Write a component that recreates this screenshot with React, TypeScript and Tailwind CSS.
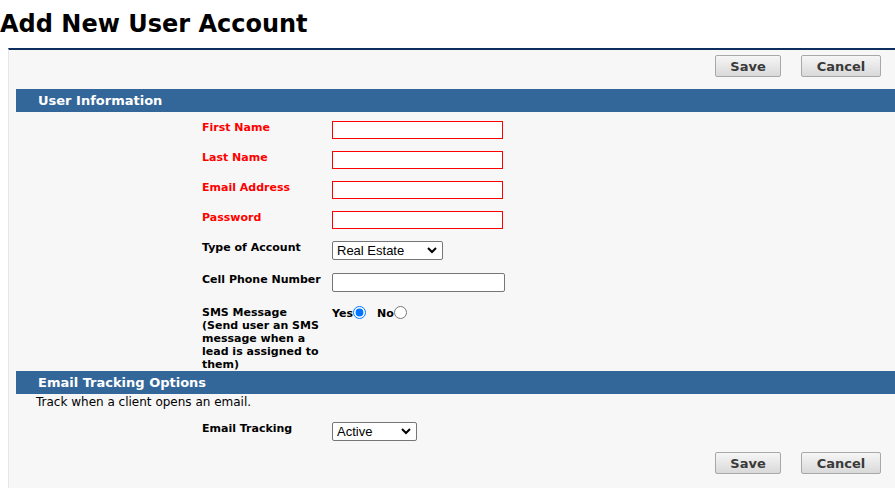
import React from 'react';

const font = "font-['DejaVu_Sans',Verdana,sans-serif]";

const Button: React.FC<{ label: string; width: string }> = ({ label, width }) => (
  <button
    type="button"
    className={`${width} h-[22px] rounded-[2px] border border-[#a8a8a8] bg-gradient-to-b from-[#f6f6f6] to-[#d9d9d9] text-[13px] font-bold leading-none text-[#3a3a3a]`}
  >
    {label}
  </button>
);

const Chevron = () => (
  <svg className="pointer-events-none absolute right-[6px] top-[6px]" width="10" height="7" viewBox="0 0 10 7">
    <path d="M1 1l4 4 4-4" fill="none" stroke="#000" strokeWidth="2" />
  </svg>
);

const Select: React.FC<{ value: string; width: string }> = ({ value, width }) => (
  <div className={`relative ${width} h-[19px]`}>
    <select
      defaultValue={value}
      className="block h-full w-full appearance-none rounded-[2px] border border-[#767676] bg-white pl-[4px] font-['Liberation_Sans',Arial,sans-serif] text-[13px] leading-none text-black"
    >
      <option>{value}</option>
    </select>
    <Chevron />
  </div>
);

const Row: React.FC<{ label: React.ReactNode; red?: boolean; h: string; children: React.ReactNode }> = ({
  label,
  red,
  h,
  children,
}) => (
  <div className={`flex items-start ${h}`}>
    <div className={`w-[130px] pr-2 text-[11px] font-bold leading-[13px] ${red ? 'text-[#ff0000]' : 'text-black'}`}>
      {label}
    </div>
    <div>{children}</div>
  </div>
);

const RedInput = () => <input type="text" className="block h-[18px] w-[171px] border border-[#ff0000] bg-white" />;

export default function App() {
  return (
    <div className={`h-[488px] w-[895px] overflow-hidden bg-white ${font}`}>
      <h1 className="h-[48px] pt-[9px] text-[24px] font-bold leading-[30px] text-black">Add New User Account</h1>
      <div className="ml-[8px] h-[440px] border-t-2 border-l border-t-[#0b2f5e] border-l-[#e6e6e6] bg-[#f7f7f7]">
        <div className="flex justify-end gap-[20px] pr-[14px] pt-[5px]">
          <Button label="Save" width="w-[66px]" />
          <Button label="Cancel" width="w-[80px]" />
        </div>

        <div className="ml-[7px] mt-[12px] flex h-[23px] items-center bg-[#336699] pl-[22px] text-[13px] font-bold text-white">
          User Information
        </div>

        <div className="pl-[193px] pt-[9px]">
          <Row label="First Name" red h="h-[30px]">
            <RedInput />
          </Row>
          <Row label="Last Name" red h="h-[30px]">
            <RedInput />
          </Row>
          <Row label="Email Address" red h="h-[30px]">
            <RedInput />
          </Row>
          <Row label="Password" red h="h-[30px]">
            <RedInput />
          </Row>
          <Row label="Type of Account" h="h-[32px]">
            <Select value="Real Estate" width="w-[111px]" />
          </Row>
          <Row label="Cell Phone Number" h="h-[33px]">
            <input type="text" className="block h-[19px] w-[173px] rounded-[2px] border border-[#767676] bg-white" />
          </Row>
          <Row label="SMS Message (Send user an SMS message when a lead is assigned to them)" h="h-[65px]">
            <div className="flex items-start text-[11px] font-bold leading-[13px] text-black">
              <span className="pt-[1px]">Yes</span>
              <input type="radio" name="sms" defaultChecked className="m-0 h-[13px] w-[13px] accent-[#0075ff]" />
              <span className="ml-[11px] pt-[1px]">No</span>
              <input type="radio" name="sms" className="m-0 h-[13px] w-[13px]" />
            </div>
          </Row>
        </div>

        <div className="ml-[7px] flex h-[23px] items-center bg-[#336699] pl-[22px] text-[13px] font-bold text-white">
          Email Tracking Options
        </div>
        <p className="pl-[27px] pt-[1px] text-[12px] leading-[14px] text-black">Track when a client opens an email.</p>

        <div className="pl-[193px] pt-[13px]">
          <Row label="Email Tracking" h="h-[30px]">
            <Select value="Active" width="w-[85px]" />
          </Row>
        </div>

        <div className="flex justify-end gap-[20px] pr-[14px]">
          <Button label="Save" width="w-[66px]" />
          <Button label="Cancel" width="w-[80px]" />
        </div>
      </div>
    </div>
  );
}
